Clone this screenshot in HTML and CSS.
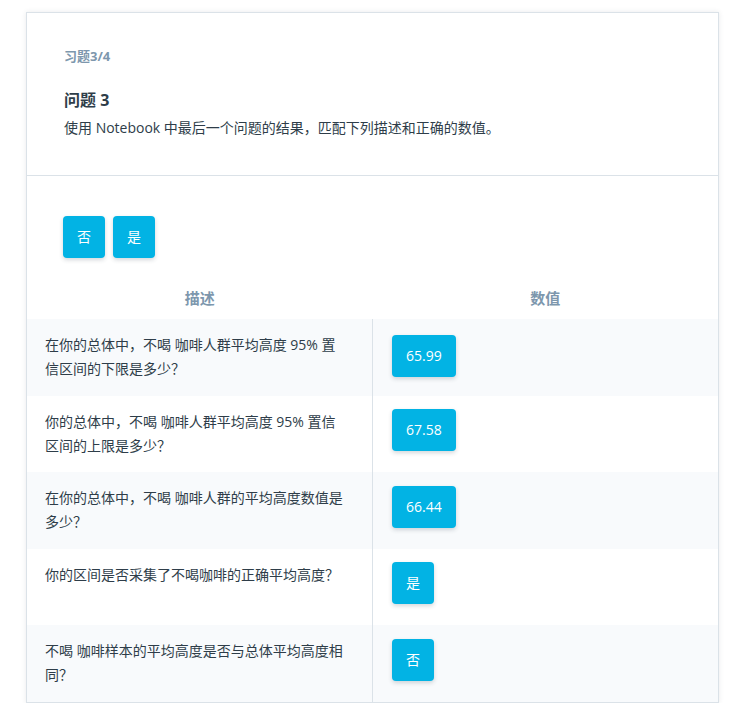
FILE: index.html
```html
<!DOCTYPE html>
<html lang="zh-CN">
<head>
<meta charset="utf-8">
<title>习题 3/4</title>
<link rel="stylesheet" href="styles.css">
</head>
<body>
<div class="card">
  <div class="head">
    <div class="kicker">习题3/4</div>
    <h2 class="title">问题 3</h2>
    <p class="desc">使用 Notebook 中最后一个问题的结果，匹配下列描述和正确的数值。</p>
  </div>
  <div class="body">
    <div class="choices">
      <button class="chip">否</button>
      <button class="chip">是</button>
    </div>
    <table class="match">
      <thead>
        <tr><th>描述</th><th>数值</th></tr>
      </thead>
      <tbody>
        <tr><td class="q">在你的总体中，不喝 咖啡人群平均高度 95% 置信区间的下限是多少？</td><td class="v"><button class="chip">65.99</button></td></tr>
        <tr><td class="q">你的总体中，不喝 咖啡人群平均高度 95% 置信区间的上限是多少？</td><td class="v"><button class="chip">67.58</button></td></tr>
        <tr><td class="q">在你的总体中，不喝 咖啡人群的平均高度数值是多少？</td><td class="v"><button class="chip">66.44</button></td></tr>
        <tr><td class="q">你的区间是否采集了不喝咖啡的正确平均高度？</td><td class="v"><button class="chip">是</button></td></tr>
        <tr><td class="q">不喝 咖啡样本的平均高度是否与总体平均高度相同？</td><td class="v"><button class="chip">否</button></td></tr>
      </tbody>
    </table>
  </div>
</div>
</body>
</html>
```

FILE: styles.css
```css
html, body {
  margin: 0;
  padding: 0;
  background: #ffffff;
}
body {
  font-family: "Open Sans", "Noto Sans CJK SC", sans-serif;
  color: #2e3d49;
  padding: 12px 15px 0 26px;
}
.card {
  width: 691px;
  border: 1px solid #dbe2e8;
  box-shadow: 0 0 5px rgba(46, 61, 73, 0.10);
  background: #fff;
}
.head {
  padding: 34px 36px 35px 37px;
  border-bottom: 1px solid #dbe2e8;
}
.kicker {
  font-size: 13px;
  line-height: 18px;
  font-weight: 700;
  color: #7d97ad;
}
.title {
  margin: 23px 0 0 0;
  font-size: 16px;
  line-height: 24px;
  font-weight: 700;
  color: #2e3d49;
}
.desc {
  margin: 4px 0 0 0;
  font-size: 14px;
  line-height: 24px;
}
.body {
  padding-top: 40px;
}
.choices {
  display: flex;
  gap: 8px;
  padding-left: 36px;
}
.chip {
  font-family: "Open Sans", "Noto Sans CJK SC", sans-serif;
  font-size: 14px;
  line-height: 42px;
  height: 42px;
  padding: 0 14px;
  border: 0;
  border-radius: 4px;
  background: #02b3e4;
  color: #fff;
  box-shadow: 0 2px 4px rgba(46, 61, 73, 0.2);
}
.match {
  margin-top: 24px;
  width: 100%;
  border-collapse: collapse;
  table-layout: fixed;
}
.match th {
  font-size: 15px;
  line-height: 17px;
  font-weight: 700;
  color: #7d97ad;
  padding: 8px 0 12px;
  text-align: center;
}
.match tbody tr:nth-child(odd) {
  background: #f8fafc;
}
.q {
  width: 301px;
  padding: 14px 26px 14px 18px;
  font-size: 14px;
  line-height: 24px;
  vertical-align: top;
  border-right: 1px solid #dbe2e8;
}
.v {
  padding: 13.5px 18px 21px 19px;
  vertical-align: top;
}
.match tbody tr:first-child .v {
  padding-top: 16px;
  padding-bottom: 18.6px;
}
```
